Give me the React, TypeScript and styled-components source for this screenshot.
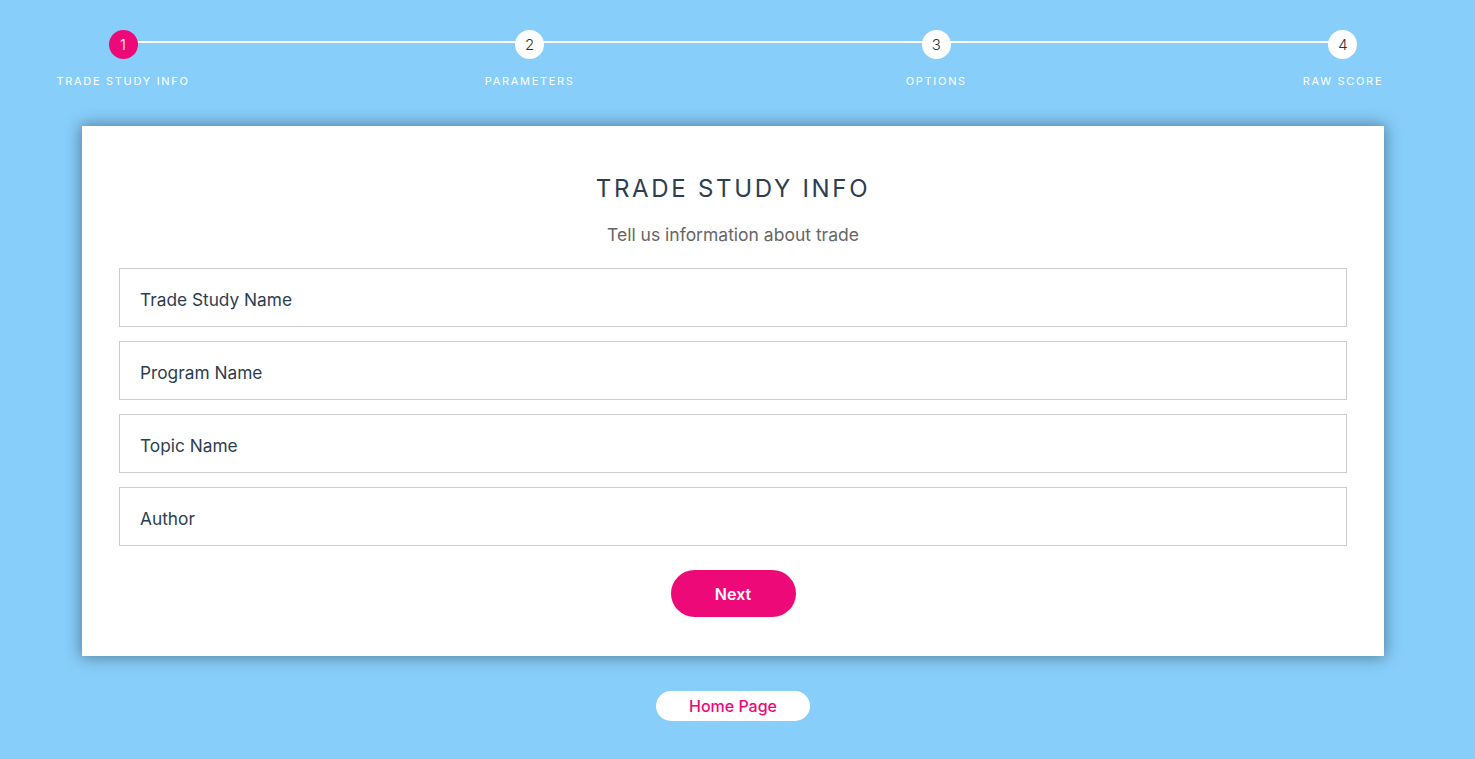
import styled, { createGlobalStyle } from "styled-components";

const GlobalStyle = createGlobalStyle`
  * {
    box-sizing: border-box;
  }
  html, body {
    margin: 0;
    padding: 0;
    background: #87cefa;
    font-family: Inter, "Open Sans", sans-serif;
  }
`;

const Page = styled.div`
  min-height: 759px;
  display: flex;
  flex-direction: column;
  align-items: center;
  padding: 30px 9px 0 0;
`;

const Progress = styled.ol`
  position: relative;
  width: 1380px;
  margin: 0;
  padding: 0;
  list-style: none;
  display: flex;
  justify-content: space-between;

  &::before {
    content: "";
    position: absolute;
    left: 80px;
    right: 80px;
    top: 11px;
    height: 2px;
    background: white;
  }
`;

const Step = styled.li`
  position: relative;
  width: 160px;
  display: flex;
  flex-direction: column;
  align-items: center;
`;

const Dot = styled.span<{ $active?: boolean }>`
  width: 29px;
  height: 29px;
  border-radius: 50%;
  display: flex;
  align-items: center;
  justify-content: center;
  font-size: 15px;
  font-weight: 300;
  color: ${(p) => (p.$active ? "white" : "#333")};
  background: ${(p) => (p.$active ? "#ee0979" : "white")};
`;

const StepLabel = styled.span`
  margin-top: 15px;
  font-size: 11px;
  letter-spacing: 1.7px;
  color: white;
  text-transform: uppercase;
`;

const Card = styled.form`
  width: 1302px;
  margin-top: 38px;
  background: white;
  padding: 48px 37px 39px 37px;
  box-shadow: 0 0 15px 1px rgba(0, 0, 0, 0.4);
  display: flex;
  flex-direction: column;
  align-items: center;
`;

const Title = styled.h2`
  margin: 0;
  font-size: 24px;
  line-height: 30px;
  font-weight: 400;
  letter-spacing: 2.7px;
  color: #2c3e50;
  text-transform: uppercase;
`;

const Subtitle = styled.h3`
  margin: 21px 0 23px;
  font-size: 17.5px;
  line-height: 20px;
  font-weight: 400;
  color: #666;
`;

const Fields = styled.div`
  width: 100%;
  display: flex;
  flex-direction: column;
  gap: 14px;
`;

const Field = styled.input`
  width: 100%;
  height: 59px;
  padding: 4px 20px 0;
  border: 1px solid #ccc;
  border-radius: 0;
  font-family: inherit;
  font-size: 17.3px;
  color: #2c3e50;
  outline: none;

  &::placeholder {
    color: #2c3e50;
  }
`;

const NextButton = styled.button`
  margin-top: 24px;
  width: 125px;
  height: 47px;
  border: none;
  border-radius: 24px;
  background: #ee0979;
  color: white;
  font-family: inherit;
  font-size: 16px;
  font-weight: 600;
  cursor: pointer;
`;

const HomeButton = styled.button`
  margin-top: 35px;
  width: 154px;
  height: 30px;
  border: none;
  border-radius: 15px;
  background: white;
  color: #ee0979;
  font-family: inherit;
  font-size: 16px;
  font-weight: 500;
  cursor: pointer;
`;

const steps = ["Trade Study Info", "Parameters", "Options", "Raw Score"];
const fields = ["Trade Study Name", "Program Name", "Topic Name", "Author"];

export default function App() {
  return (
    <>
      <GlobalStyle />
      <Page>
        <Progress>
          {steps.map((s, i) => (
            <Step key={s}>
              <Dot $active={i === 0}>{i + 1}</Dot>
              <StepLabel>{s}</StepLabel>
            </Step>
          ))}
        </Progress>
        <Card onSubmit={(e) => e.preventDefault()}>
          <Title>Trade Study Info</Title>
          <Subtitle>Tell us information about trade</Subtitle>
          <Fields>
            {fields.map((f) => (
              <Field key={f} placeholder={f} />
            ))}
          </Fields>
          <NextButton type="submit">Next</NextButton>
        </Card>
        <HomeButton type="button">Home Page</HomeButton>
      </Page>
    </>
  );
}
